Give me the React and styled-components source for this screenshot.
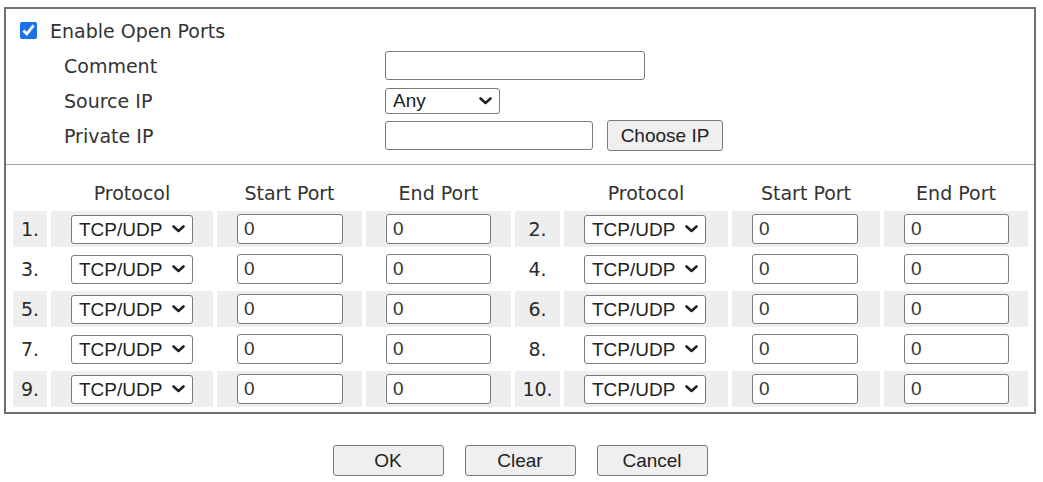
import React from 'react';
import styled, { createGlobalStyle } from 'styled-components';

const GlobalStyle = createGlobalStyle`
    body{
        margin:0;
        background:#fff;
        font-family:"DejaVu Sans", Verdana, sans-serif;
    }
`;

const Page = styled.div`
    padding:7px 0 0 4px;
    width:1032px;
`;

const Box = styled.div`
    box-sizing:border-box;
    width:1032px;
    border:2px solid #707070;
    background:#fff;
`;

const Top = styled.div`
    padding:4px 0 11px 14px;
    border-bottom:1px solid #a8a8a8;
`;

const EnableRow = styled.label`
    display:flex;
    align-items:center;
    height:35px;
    gap:13px;
    font-size:19px;
    color:#333;

    input{
        width:17px;
        height:17px;
        margin:0;
        accent-color:#1a73e8;
    }
`;

const FieldRow = styled.div`
    display:grid;
    grid-template-columns:321px auto;
    align-items:center;
    height:35px;
    padding-left:44px;
`;

const Label = styled.span`
    font-size:19px;
    color:#333;
`;

const Controls = styled.div`
    display:flex;
    align-items:center;
    gap:14px;
`;

const TextBox = styled.input`
    box-sizing:border-box;
    width:${props=>props.w || 106}px;
    height:${props=>props.h || 30}px;
    margin:0;
    padding:0 6px;
    border:1px solid #7a7a7a;
    border-radius:3px;
    background:#fff;
    font-family:"Liberation Sans", Arial, sans-serif;
    font-size:19px;
    color:#333;
`;

const SelectWrap = styled.span`
    position:relative;
    display:inline-flex;

    svg{
        position:absolute;
        right:8px;
        top:50%;
        margin-top:-4px;
        pointer-events:none;
    }
`;

const SelectBox = styled.select`
    box-sizing:border-box;
    appearance:none;
    width:${props=>props.w || 122}px;
    height:${props=>props.h || 29}px;
    margin:0;
    padding:0 24px 0 7px;
    border:1px solid #7a7a7a;
    border-radius:3px;
    background:#fff;
    font-family:"Liberation Sans", Arial, sans-serif;
    font-size:19px;
    color:#222;
`;

const Button = styled.button`
    box-sizing:border-box;
    width:${props=>props.w || 111}px;
    height:31px;
    margin:0;
    padding:0;
    border:1px solid #7a7a7a;
    border-radius:3px;
    background:#efefef;
    font-family:"Liberation Sans", Arial, sans-serif;
    font-size:19px;
    color:#222;
`;

const Table = styled.div`
    display:grid;
    grid-template-columns:34px 162px 145px 145px 45px 164px 148px 144px;
    column-gap:4px;
    row-gap:4px;
    padding:14px 0 5px 7px;
`;

const Head = styled.div`
    height:28px;
    display:flex;
    align-items:center;
    justify-content:center;
    font-size:19px;
    color:#333;
`;

const Cell = styled.div`
    height:36px;
    display:flex;
    align-items:center;
    justify-content:${props=>props.center ? 'center' : 'flex-start'};
    padding-left:${props=>props.center ? 0 : 20}px;
    background:${props=>props.shaded ? '#eeeeee' : '#fff'};
    font-size:19px;
    color:#2a2a2a;
`;

const Footer = styled.div`
    display:flex;
    justify-content:center;
    gap:21px;
    margin-top:31px;
`;

const Chevron = () => (
    <svg width="13" height="8" viewBox="0 0 13 8">
        <path d="M1.5 1.5 L6.5 6 L11.5 1.5" fill="none" stroke="#222" strokeWidth="2.6" strokeLinecap="round" strokeLinejoin="round"/>
    </svg>
);

const Select = ({w, h, options}) => (
    <SelectWrap>
        <SelectBox w={w} h={h} defaultValue={options[0]}>
            {options.map(o=><option key={o}>{o}</option>)}
        </SelectBox>
        <Chevron/>
    </SelectWrap>
);

const heads = ['', 'Protocol', 'Start Port', 'End Port'];
const rows = [[1,2],[3,4],[5,6],[7,8],[9,10]];

const PortGroup = ({n, shaded}) => (
    <>
        <Cell center shaded={shaded}>{n}.</Cell>
        <Cell shaded={shaded}><Select options={['TCP/UDP','TCP','UDP']}/></Cell>
        <Cell shaded={shaded}><TextBox defaultValue="0"/></Cell>
        <Cell shaded={shaded}><TextBox w={105} defaultValue="0"/></Cell>
    </>
);

const App = () => {
    return(
        <Page>
            <GlobalStyle/>
            <Box>
                <Top>
                    <EnableRow>
                        <input type="checkbox" defaultChecked/>
                        Enable Open Ports
                    </EnableRow>
                    <FieldRow>
                        <Label>Comment</Label>
                        <Controls><TextBox w={260} h={29}/></Controls>
                    </FieldRow>
                    <FieldRow>
                        <Label>Source IP</Label>
                        <Controls><Select w={115} h={26} options={['Any']}/></Controls>
                    </FieldRow>
                    <FieldRow>
                        <Label>Private IP</Label>
                        <Controls>
                            <TextBox w={208} h={29}/>
                            <Button w={116}>Choose IP</Button>
                        </Controls>
                    </FieldRow>
                </Top>
                <Table>
                    {[...heads, ...heads].map((h,k)=><Head key={k}>{h}</Head>)}
                    {rows.map((r,k)=>
                        <React.Fragment key={k}>
                            <PortGroup n={r[0]} shaded={k%2===0}/>
                            <PortGroup n={r[1]} shaded={k%2===0}/>
                        </React.Fragment>
                    )}
                </Table>
            </Box>
            <Footer>
                <Button>OK</Button>
                <Button>Clear</Button>
                <Button>Cancel</Button>
            </Footer>
        </Page>
    )
}

export default App;
